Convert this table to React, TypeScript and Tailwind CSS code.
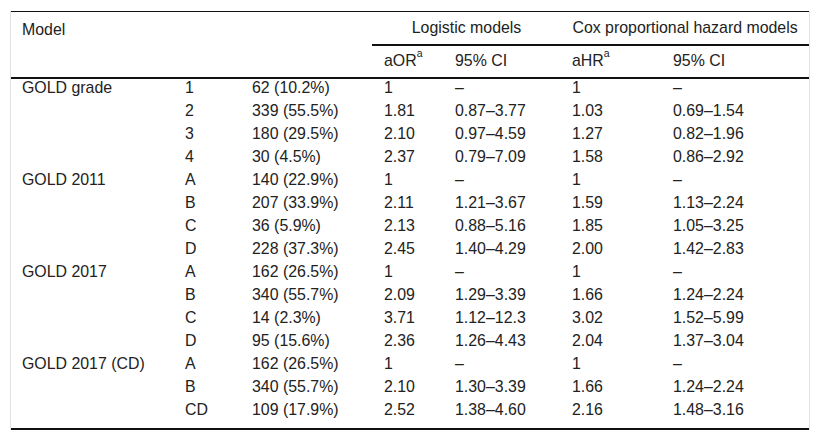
type Row = {
  model?: string;
  group: string;
  n: string;
  aor: string;
  orCi: string;
  ahr: string;
  hrCi: string;
};

const rows: Row[] = [
  { model: 'GOLD grade', group: '1', n: '62 (10.2%)', aor: '1', orCi: '–', ahr: '1', hrCi: '–' },
  { group: '2', n: '339 (55.5%)', aor: '1.81', orCi: '0.87–3.77', ahr: '1.03', hrCi: '0.69–1.54' },
  { group: '3', n: '180 (29.5%)', aor: '2.10', orCi: '0.97–4.59', ahr: '1.27', hrCi: '0.82–1.96' },
  { group: '4', n: '30 (4.5%)', aor: '2.37', orCi: '0.79–7.09', ahr: '1.58', hrCi: '0.86–2.92' },
  { model: 'GOLD 2011', group: 'A', n: '140 (22.9%)', aor: '1', orCi: '–', ahr: '1', hrCi: '–' },
  { group: 'B', n: '207 (33.9%)', aor: '2.11', orCi: '1.21–3.67', ahr: '1.59', hrCi: '1.13–2.24' },
  { group: 'C', n: '36 (5.9%)', aor: '2.13', orCi: '0.88–5.16', ahr: '1.85', hrCi: '1.05–3.25' },
  { group: 'D', n: '228 (37.3%)', aor: '2.45', orCi: '1.40–4.29', ahr: '2.00', hrCi: '1.42–2.83' },
  { model: 'GOLD 2017', group: 'A', n: '162 (26.5%)', aor: '1', orCi: '–', ahr: '1', hrCi: '–' },
  { group: 'B', n: '340 (55.7%)', aor: '2.09', orCi: '1.29–3.39', ahr: '1.66', hrCi: '1.24–2.24' },
  { group: 'C', n: '14 (2.3%)', aor: '3.71', orCi: '1.12–12.3', ahr: '3.02', hrCi: '1.52–5.99' },
  { group: 'D', n: '95 (15.6%)', aor: '2.36', orCi: '1.26–4.43', ahr: '2.04', hrCi: '1.37–3.04' },
  { model: 'GOLD 2017 (CD)', group: 'A', n: '162 (26.5%)', aor: '1', orCi: '–', ahr: '1', hrCi: '–' },
  { group: 'B', n: '340 (55.7%)', aor: '2.10', orCi: '1.30–3.39', ahr: '1.66', hrCi: '1.24–2.24' },
  { group: 'CD', n: '109 (17.9%)', aor: '2.52', orCi: '1.38–4.60', ahr: '2.16', hrCi: '1.48–3.16' },
];

const sup = 'text-[10.5px] align-[0.38em] leading-none';

export default function App() {
  return (
    <div
      className="w-[820px] h-[440px] bg-white pt-[11px] pl-[10px] text-[#222] text-[15.9px]"
      style={{ fontFamily: '"Liberation Sans", Arial, sans-serif' }}
    >
      <div className="w-[800px] border-x border-[#e2e2e2]">
        <table className="w-full table-fixed border-collapse">
          <colgroup>
            <col className="w-[162px]" />
            <col className="w-[67px]" />
            <col className="w-[132px]" />
            <col className="w-[71px]" />
            <col className="w-[118px]" />
            <col className="w-[100px]" />
            <col className="w-[148px]" />
          </colgroup>
          <thead className="border-t border-[#111]">
            <tr>
              <th colSpan={3} rowSpan={2} className="px-[11px] pt-[11px] align-top text-left font-normal leading-[14px] border-b-2 border-[#111]">
                Model
              </th>
              <th colSpan={2} className="h-[33px] px-[6px] text-center font-normal leading-[16px] border-b-2 border-[#111]">
                Logistic models
              </th>
              <th colSpan={2} className="h-[33px] px-[6px] text-center font-normal leading-[16px] border-b-2 border-[#111]">
                Cox proportional hazard models
              </th>
            </tr>
            <tr>
              <th className="h-[33px] px-[12px] text-left font-normal leading-[16px] border-b-2 border-[#111]">
                aOR<sup className={sup}>a</sup>
              </th>
              <th className="h-[33px] px-[12px] text-left font-normal leading-[16px] border-b-2 border-[#111]">95% CI</th>
              <th className="h-[33px] px-[11px] text-left font-normal leading-[16px] border-b-2 border-[#111]">
                aHR<sup className={sup}>a</sup>
              </th>
              <th className="h-[33px] px-[12px] text-left font-normal leading-[16px] border-b-2 border-[#111]">95% CI</th>
            </tr>
          </thead>
          <tbody className="border-b-2 border-[#111] leading-[16px]">
            {rows.map((r, i) => {
              const pad = i === rows.length - 1 ? 'pt-[1px] pb-[10px]' : 'pt-[1px] pb-[6px]';
              return (
                <tr key={i}>
                  <td className={`px-[11px] whitespace-nowrap ${pad}`}>{r.model ?? ''}</td>
                  <td className={`px-[12px] ${pad}`}>{r.group}</td>
                  <td className={`px-[12px] whitespace-nowrap ${pad}`}>{r.n}</td>
                  <td className={`px-[12px] ${pad}`}>{r.aor}</td>
                  <td className={`px-[12px] ${pad}`}>{r.orCi}</td>
                  <td className={`px-[11px] ${pad}`}>{r.ahr}</td>
                  <td className={`px-[12px] ${pad}`}>{r.hrCi}</td>
                </tr>
              );
            })}
          </tbody>
        </table>
      </div>
    </div>
  );
}
